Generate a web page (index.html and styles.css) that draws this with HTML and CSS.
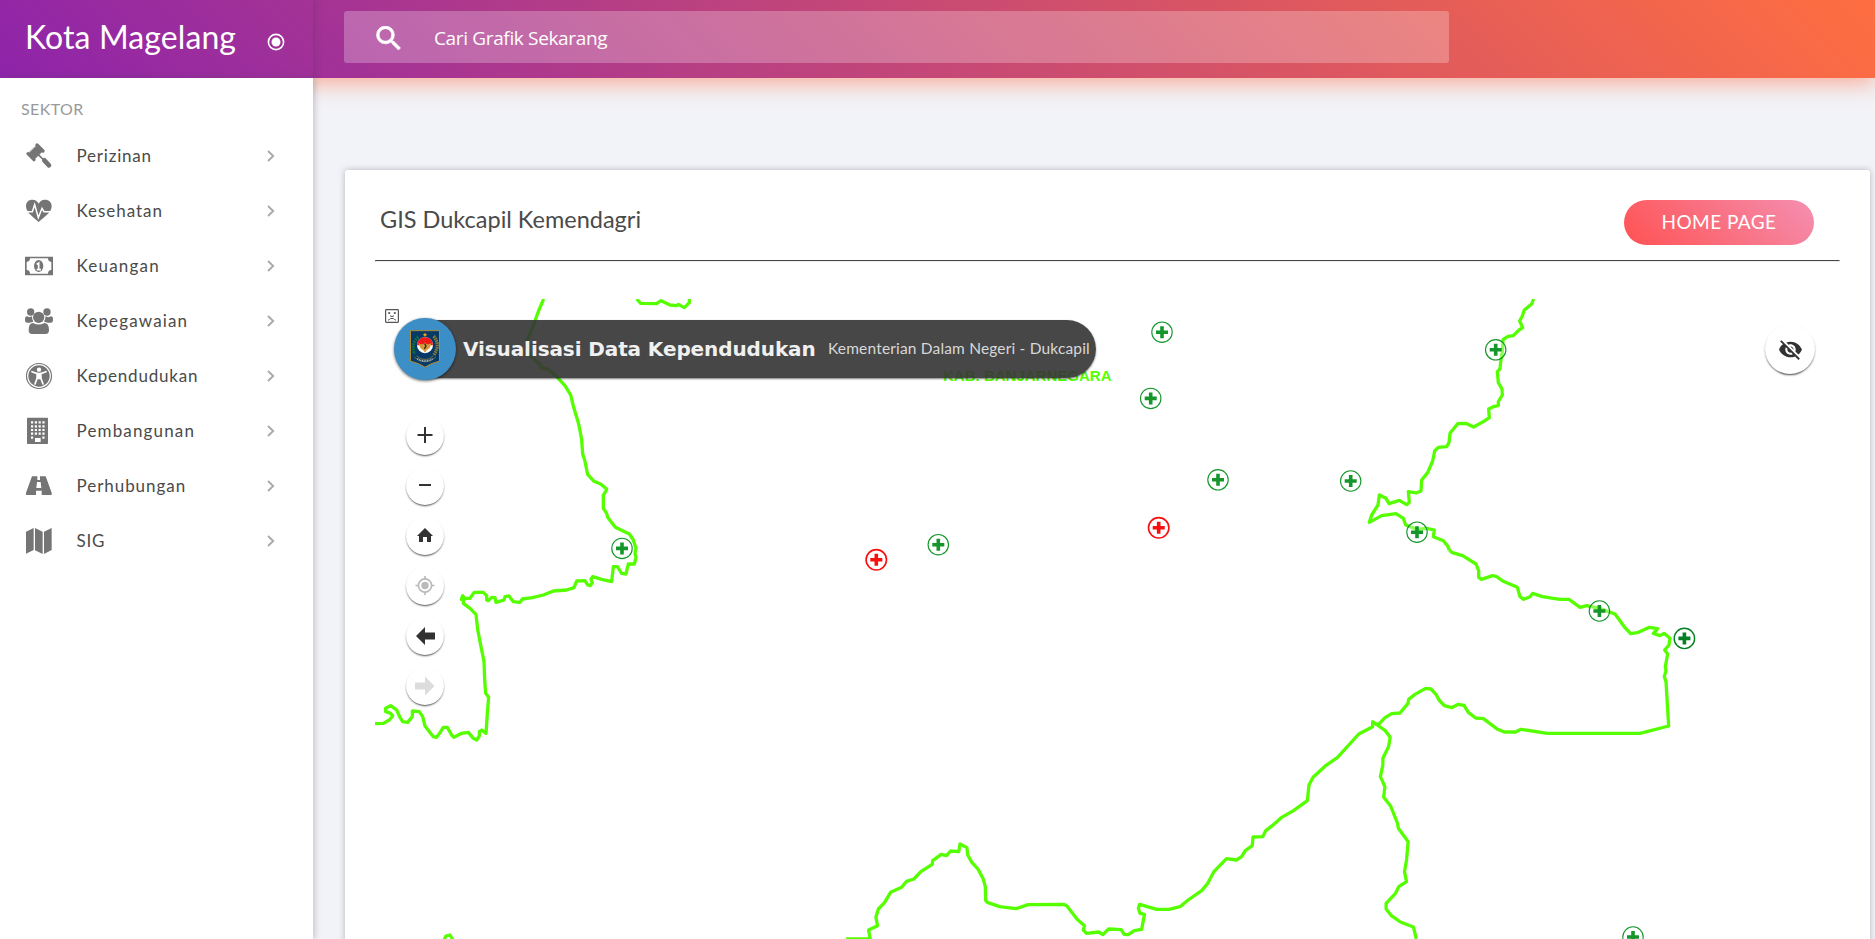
FILE: index.html
```html
<!DOCTYPE html>
<html lang="id">
<head>
<meta charset="utf-8">
<title>Kota Magelang</title>
<link rel="stylesheet" href="styles.css">
</head>
<body>
<header class="topbar">
  <div class="brand">
    <span class="brand-name">Kota Magelang</span>
    <svg class="brand-toggle" viewBox="0 0 18 18"><circle cx="9" cy="9" r="7.600" fill="none" stroke="#fff" stroke-width="1.600"/><circle cx="9" cy="9" r="4.500" fill="#fff"/></svg>
  </div>
  <div class="search">
    <svg class="search-icon" viewBox="3 3 17.5 17.5"><path fill="#fff" stroke="#fff" stroke-width=".5" d="M15.5 14h-.79l-.28-.27A6.47 6.47 0 0 0 16 9.5 6.5 6.5 0 1 0 9.500 16c1.610 0 3.090-.59 4.230-1.570l.27.28v.79l5 4.990L20.490 19l-4.990-5zm-6 0C7.010 14 5 11.990 5 9.500S7.010 5 9.500 5 14 7.010 14 9.500 11.990 14 9.500 14z"/></svg>
    <span class="search-text">Cari Grafik Sekarang</span>
  </div>
</header>
<div class="layout">
  <nav class="sidebar">
    <div class="nav-heading"><span>SEKTOR</span></div>
    <a class="nav-item"><svg class="nav-icon" viewBox="0 0 84 84"><g stroke="#757575" stroke-linecap="round"><path d="M36 9 54 27M9 35 27 53" stroke-width="10"/><path d="M34 12 51 29 30 50 12 33z" stroke-width="2"/><path d="M40 38 56 54" stroke-width="5"/><path d="M58 55 72 70" stroke-width="14"/></g></svg><span class="nav-label t-perizinan">Perizinan</span><svg class="chev" viewBox="0 0 8 12"><path d="M1 1 6.200 6 1 11"/></svg></a>
    <a class="nav-item"><svg class="nav-icon" viewBox="0 0 84 84"><path d="M41 75C20 56 3 46 3 27C3 14 12 8 22 8C32 8 38 14 41 20C44 14 50 8 60 8C72 8 80 16 80 27C80 46 62 56 41 75z"/><path d="M0 44H22L29 23 40 62 51 34 57 44H84" fill="none" stroke="#fff" stroke-width="4.500"/></svg><span class="nav-label t-kesehatan">Kesehatan</span><svg class="chev" viewBox="0 0 8 12"><path d="M1 1 6.200 6 1 11"/></svg></a>
    <a class="nav-item"><svg class="nav-icon" viewBox="0 0 84 84"><path fill-rule="evenodd" d="M0 14H84V70H0zM15 19A11 11 0 0 1 5 30V54A11 11 0 0 1 15 65H69A11 11 0 0 1 79 54V30A11 11 0 0 1 69 19z"/><ellipse cx="41" cy="42" rx="14" ry="18"/><path d="M35 37 41 33V52M35 53H48" fill="none" stroke="#fff" stroke-width="5"/></svg><span class="nav-label t-keuangan">Keuangan</span><svg class="chev" viewBox="0 0 8 12"><path d="M1 1 6.200 6 1 11"/></svg></a>
    <a class="nav-item"><svg class="nav-icon" viewBox="0 0 84 84"><circle cx="17" cy="15" r="11"/><circle cx="66" cy="15" r="11"/><circle cx="41" cy="31" r="17"/><path d="M0 38Q0 28 6 28Q14 33 21 28Q21 39 25 44Q18 45 14 47H7Q0 47 0 38zM84 38Q84 28 78 28Q70 33 62 28Q61 39 57 44Q64 45 68 47H77Q84 47 84 38z"/><path d="M24 48Q41 57 58 48Q72 48 72 70Q72 81 62 81H21Q11 81 11 70Q11 48 24 48z"/></svg><span class="nav-label t-kepegawaian">Kepegawaian</span><svg class="chev" viewBox="0 0 8 12"><path d="M1 1 6.200 6 1 11"/></svg></a>
    <a class="nav-item"><svg class="nav-icon" viewBox="0 0 84 84"><circle cx="42" cy="42" r="37.500" fill="none" stroke="#757575" stroke-width="3.500"/><circle cx="42" cy="42" r="32"/><circle cx="42" cy="23" r="6.500" fill="#fff"/><path d="M21 29 37 35 36 50 30 66M63 29 47 35 48 50 54 66" fill="none" stroke="#fff" stroke-width="5" stroke-linecap="round"/><path d="M35 32H49L48 52H36z" fill="#fff"/></svg><span class="nav-label t-kependudukan">Kependudukan</span><svg class="chev" viewBox="0 0 8 12"><path d="M1 1 6.200 6 1 11"/></svg></a>
    <a class="nav-item"><svg class="nav-icon" viewBox="0 0 84 84"><rect x="6" y="2" width="63" height="79" rx="2"/><path d="M18 16H60M18 28H60M18 39H60M18 50H60" stroke="#fff" stroke-width="6.500" stroke-dasharray="6.500 4.900"/><path d="M18 62H24.500M52 62H58.500" stroke="#fff" stroke-width="6.500"/><path d="M30 75V63H47V75z" fill="#fff"/></svg><span class="nav-label t-pembangunan">Pembangunan</span><svg class="chev" viewBox="0 0 8 12"><path d="M1 1 6.200 6 1 11"/></svg></a>
    <a class="nav-item"><svg class="nav-icon" viewBox="0 0 84 84"><path fill-rule="evenodd" d="M21 13H37V24H45V13H62L80 62Q82 69 78 69H50V56H33V69H5Q1 69 3 62zM36 30 34 48H49L47 30z"/></svg><span class="nav-label t-perhubungan">Perhubungan</span><svg class="chev" viewBox="0 0 8 12"><path d="M1 1 6.200 6 1 11"/></svg></a>
    <a class="nav-item"><svg class="nav-icon" viewBox="0 0 84 84"><path d="M3 14 26 3V69L3 80zM30 3 53 14V81L30 70zM57 14 80 3V69L57 81z"/></svg><span class="nav-label t-sig">SIG</span><svg class="chev" viewBox="0 0 8 12"><path d="M1 1 6.200 6 1 11"/></svg></a>
  </nav>
  <main class="content">
    <section class="card">
      <div class="card-head">
        <h1 class="card-title">GIS Dukcapil Kemendagri</h1>
        <a class="home-btn"><span>HOME PAGE</span></a>
      </div>
      <hr class="rule">
      <div class="map">
        <svg class="map-canvas" viewBox="375 299 1465 640">
          <defs>
            <g id="plus"><circle r="10.200" fill="#fff" fill-opacity=".3"/><path d="M-6 0H6M0-6V6" stroke-width="3.600"/></g>
          </defs>
          <g class="border">
            <g transform="translate(370 290) scale(.33333)">
              <polyline points="521,27 506,62 496,90 483,125 472,150 470,172 482,198 500,215 512,225 515,234 533,237 562,262 585,287 602,315 611,352 625,398 632,432 635,450 638,492 644,510 653,553 672,574 692,582 710,597 707,605 700,615 700,655 710,670 713,682 736,712 778,732 790,750 798,775 795,790 798,803 793,822 775,822 768,852 755,850 742,830 730,830 725,875 695,868 668,860 663,868 667,878 661,887 653,885 645,872 620,873 612,893 590,900 550,903 520,915 487,923 457,927 450,937 430,935 417,918 405,920 402,930 378,937 375,923 365,922 355,932 350,930 350,917 340,907 313,907 300,925 283,925 278,917 274,928 281,930 280,940 300,955 318,973 323,1018 332,1065 342,1115 344,1170 347,1210 356,1222 352,1270 348,1330 335,1320 328,1325 328,1338 320,1350 310,1345 295,1327 275,1330 252,1342 245,1335 232,1312 220,1312 210,1328 200,1342 190,1340 165,1308 158,1280 148,1265 127,1263 127,1280 113,1297 98,1295 90,1282 80,1260 62,1247 47,1255 47,1265 62,1270 68,1278 58,1290 40,1300 15,1301"/>
              <polyline points="800,27 812,40 860,41 873,32 900,45 920,47 925,43 943,53 958,38 958,27"/>
            </g>
            <g transform="translate(1100 290) scale(.33333)">
              <polyline points="1301,27 1295,42 1283,52 1273,60 1267,78 1259,93 1268,113 1257,120 1240,137 1224,139 1209,149 1207,185 1202,215 1200,237 1192,245 1195,278 1206,297 1207,315 1195,335 1195,347 1180,350 1166,357 1168,383 1150,395 1121,411 1097,400 1073,401 1050,430 1047,458 1040,470 1015,472 1004,483 998,513 983,548 965,570 963,603 948,609 925,605 928,637 920,644 898,631 867,641 858,625 838,615 834,645 815,675 808,697 845,677 888,671 910,685 917,705 950,718 980,715 1003,720 1000,740 1030,752 1043,768 1048,780"/>
            </g>
            <g transform="translate(1320 480) scale(.33333)">
              <polyline points="388,210 397,218 428,227 468,252 476,272 476,292 484,298 518,287 530,290 548,303 592,322 600,350 611,358 630,350 638,340 667,350 720,358 747,358 780,382 800,377 838,385 885,402 915,443 932,461 952,458 988,442 1013,446 1000,460 1020,467 1032,460 1050,475 1047,495 1034,510 1043,522 1036,560 1038,572 1033,590 1038,605 1046,738 960,760 682,760 603,748 587,756 553,756 533,748 490,716 467,714 445,697 432,676 415,673 395,683 373,677 357,660 348,643 333,627 317,625 285,643 266,658 264,670 240,699 215,701 195,713 178,731 165,733"/>
            </g>
            <g transform="translate(820 680) scale(.40816 .33333)">
              <polyline points="1362,132 1354,125 1354,140 1320,162 1268,232 1240,256 1208,292 1198,315 1194,362 1160,392 1130,413 1108,437 1092,452 1085,470 1061,471 1059,497 1042,512 1033,530 1020,540 996,536 965,575 950,610 935,632 902,660 882,680 855,688 825,688 783,673 780,685 784,700 795,703 788,748 770,752 755,764 745,763 738,749 707,747 693,764 683,756 653,760 645,750 648,737 630,718 605,678 597,673 510,674 480,686 440,680 410,667 406,662 405,620 400,597 387,567 372,547 362,525 360,503 343,492 340,515 320,513 310,527 297,523 276,542 275,553 247,575 230,597 212,604 200,622 173,637 158,668 143,687 137,712 141,737 119,750 123,777 64,777"/>
              <polyline points="1362,132 1385,152 1397,172 1393,200 1379,235 1379,255 1373,290 1384,320 1381,352 1398,378 1415,430 1417,445 1441,485 1437,540 1432,575 1437,605 1418,620 1410,640 1387,670 1387,687 1400,707 1422,726 1454,741 1461,777"/>
            </g>
            <polyline points="444,940 446,936 450,935 453,940"/>
          </g>
          <text class="region" x="943" y="380.700" textLength="168.500">KAB. BANJARNEGARA</text>
          <g class="pin">
            <use href="#plus" x="1162" y="332.200"/><use href="#plus" x="1150.700" y="398.400"/><use href="#plus" x="938.300" y="544.700"/><use href="#plus" x="1218" y="479.800"/><use href="#plus" x="1350.700" y="481"/><use href="#plus" x="1495.700" y="349.800"/><use href="#plus" x="1417" y="532.200"/><use href="#plus" x="1599.400" y="611"/><use href="#plus" x="622" y="548.400"/><use href="#plus" x="1633" y="937"/>
          </g>
          <g class="pin pin-dark"><use href="#plus" x="1684.400" y="638.400"/></g>
          <g class="pin pin-red"><use href="#plus" x="876.300" y="559.800"/><use href="#plus" x="1158.700" y="527.800"/></g>
        </svg>
        <svg class="broken" viewBox="0 0 14 14"><rect x=".6" y=".6" width="12.800" height="12.800" rx=".8" fill="#fff" stroke="#555" stroke-width="1.200"/><path d="M3.500 3 5 5M5 3 3.500 5M9 3 10.500 5M10.500 3 9 5M5 6.800 7 7.500 9 6.800M3 11.200Q5 10.600 5.500 9.500H8.500Q9 10.600 11 11.200" fill="none" stroke="#555"/></svg>
        <div class="banner">
          <span class="banner-title">Visualisasi Data Kependudukan</span>
          <span class="banner-sub">Kementerian Dalam Negeri - Dukcapil</span>
        </div>
        <div class="emblem">
          <svg viewBox="0 0 90 113"><path d="M1.500 1.500H88.500V93Q62 99 45 111Q28 99 1.500 93z" fill="#063a66" stroke="#b08a2e" stroke-width="3"/><path d="M25 20Q2 40 14 72" fill="none" stroke="#16703c" stroke-width="9" stroke-dasharray="5 3"/><path d="M71 18Q92 42 72 74" fill="none" stroke="#8f7a34" stroke-width="10" stroke-dasharray="5 2"/><circle cx="45" cy="45" r="24" fill="#fff"/><path d="M21 45A24 24 0 0 1 69 45z" fill="#f01818"/><path d="M45 36Q37 48 26 38 28 56 40 60L45 68 50 60Q62 56 64 38 53 48 45 36z" fill="#d39b3c"/><path d="M44 40 48 48 43 56" stroke="#3b2410" stroke-width="4" fill="none"/><path d="M45 8 48 12 52 13 48 17 45 20 42 17 38 13 42 12z" fill="#e8a318"/><path d="M13 81Q30 96 45 95 60 96 77 81M20 77Q32 89 45 88 58 89 70 77" stroke="#b08a2e" stroke-width="2" fill="none"/><path d="M22 86Q34 93 45 92 56 93 68 86" stroke="#9fb8cc" stroke-width="5" stroke-dasharray="3 2" fill="none"/></svg>
        </div>
        <div class="tools">
          <a class="tool"><svg viewBox="0 0 38 38"><path d="M11.500 18H26.500M19 10V26" stroke="#323232" stroke-width="2"/></svg></a>
          <a class="tool"><svg viewBox="0 0 38 38"><path d="M13 18H25" stroke="#323232" stroke-width="2"/></svg></a>
          <a class="tool"><svg viewBox="0 0 38 38"><path d="M19 11 27 19H25V25H21V20H17V25H13V19H11z" fill="#323232"/></svg></a>
          <a class="tool"><svg viewBox="0 0 38 38"><g stroke="#bababa" stroke-width="1.700" fill="none"><circle cx="19" cy="18.500" r="6.600"/><path d="M19 9V12M19 25V28M9.500 18.500H12.500M25.500 18.500H28.500"/></g><circle cx="19" cy="18.500" r="3.700" fill="#bababa"/></svg></a>
          <a class="tool"><svg viewBox="0 0 38 38"><path d="M10 19 19 10V15.500H29V22.500H19V28z" fill="#323232"/></svg></a>
          <a class="tool"><svg viewBox="0 0 38 38"><path d="M28.500 19 19 9.500V15.500H9V22.500H19V28.500z" fill="#dcdcdc"/></svg></a>
        </div>
        <a class="eye"><svg viewBox="0 0 24 24"><path fill="#323232" d="M12 7c2.760 0 5 2.240 5 5 0 .65-.13 1.260-.36 1.830l2.920 2.920c1.510-1.260 2.700-2.890 3.430-4.750-1.730-4.390-6-7.500-11-7.500-1.400 0-2.740.25-3.980.7l2.160 2.160C10.740 7.130 11.350 7 12 7zM2 4.270l2.280 2.280.46.46C3.080 8.300 1.780 10.020 1 12c1.730 4.390 6 7.500 11 7.500 1.550 0 3.030-.3 4.380-.84l.42.42L19.730 22 21 20.730 3.270 3 2 4.270zM7.530 9.800l1.550 1.550c-.05.21-.08.43-.08.65 0 1.660 1.340 3 3 3 .22 0 .44-.03.65-.08l1.550 1.550c-.67.33-1.410.53-2.200.53-2.760 0-5-2.240-5-5 0-.79.2-1.530.53-2.200zm4.310-.78 3.150 3.150.02-.16c0-1.660-1.340-3-3-3l-.17.01z"/></svg></a>
      </div>
    </section>
  </main>
</div>
</body>
</html>
```
FILE: styles.css
```css
* { box-sizing: border-box; }
html, body { height: 100%; }
body {
  margin: 0;
  display: flex;
  flex-direction: column;
  overflow: hidden;
  background: #f2f3f8;
  color: #4a4a4a;
  font-family: Lato, "Open Sans", sans-serif;
}
.topbar {
  flex: none;
  height: 78px;
  display: flex;
  align-items: flex-start;
  background: linear-gradient(45deg, #8e24aa, #ff6e40);
  box-shadow: 0 6px 20px 0 rgba(255, 110, 64, .5);
}
.brand {
  width: 313px;
  height: 78px;
  padding: 0 28px 0 25px;
  display: flex;
  align-items: center;
  justify-content: space-between;
  color: #fff;
  box-shadow: 2px 0 6px rgba(69, 65, 78, .25);
  clip-path: inset(0 -12px 0 0);
}
.brand-name { font-size: 32px; letter-spacing: .1px; line-height: 40px; padding-bottom: 4px; white-space: nowrap; }
.brand-toggle { width: 18px; height: 18px; margin-top: 5px; }
.search {
  width: 1105px;
  height: 52px;
  margin: 11px 0 0 31px;
  padding-left: 32px;
  display: flex;
  align-items: center;
  gap: 33px;
  border-radius: 3px;
  background: rgba(255, 255, 255, .25);
  color: #fff;
}
.search-icon { width: 25px; height: 24px; margin-top: 1px; }
.search-text { padding-top: 2px; font: 500 19px/26px "Open Sans", "Noto Sans", sans-serif; letter-spacing: -.35px; white-space: nowrap; }
.layout { flex: 1; display: flex; min-height: 0; }
.sidebar {
  position: relative;
  flex: none;
  width: 313px;
  padding-top: 20px;
  background: #fff;
  box-shadow: 2px 0 6px rgba(69, 65, 78, .25);
}
.nav-heading { height: 30px; padding: 1px 0 0 21px; font-size: 16px; line-height: 20px; color: #999; letter-spacing: .4px; }
.nav-item { height: 55px; padding: 0 38px 0 25px; display: flex; align-items: center; }
.nav-icon { width: 28px; height: 28px; fill: #757575; }
.nav-label { flex: 1; padding-left: 23.500px; font-size: 17px; white-space: nowrap; }
.t-perizinan { letter-spacing: .8px; }
.t-kesehatan { letter-spacing: .95px; }
.t-keuangan { letter-spacing: 1.200px; }
.t-kepegawaian { letter-spacing: 1.150px; }
.t-kependudukan { letter-spacing: .8px; }
.t-pembangunan { letter-spacing: 1.150px; }
.t-perhubungan { letter-spacing: .95px; }
.t-sig { letter-spacing: .7px; }
.chev { width: 8px; height: 12px; fill: none; stroke: #aaa; stroke-width: 1.900; }
.content { flex: 1; padding: 92px 5px 0 32px; }
.card {
  height: 800px;
  padding: 30px;
  border-radius: 3px;
  background: #fff;
  box-shadow: 0 0 6px rgba(69, 65, 78, .35);
}
.card-head { height: 45px; display: flex; justify-content: space-between; padding: 0 26px 0 5px; }
.card-title { margin: 1px 0 0; font-size: 23.500px; line-height: 36px; font-weight: 400; color: #4a4a4a; white-space: nowrap; }
.home-btn {
  width: 190px;
  height: 45px;
  border-radius: 23px;
  background: linear-gradient(45deg, #ff5252, #f48fb1);
  color: #fff;
  font-size: 19px;
  letter-spacing: .45px;
  line-height: 44px;
  text-align: center;
}
.rule { height: 2px; margin: 15px 0 37px; border: 1px inset #eee; border-top-color: #999; }
.map { position: relative; width: 1465px; height: 640px; overflow: hidden; }
.map-canvas { display: block; width: 1465px; height: 640px; }
.border polyline { fill: none; stroke: #5f0; stroke-width: 3.300; stroke-linejoin: round; vector-effect: non-scaling-stroke; }
.region { font: bold 15px "Liberation Sans", Arial, sans-serif; fill: #5f0; }
.pin { fill: none; stroke: #14962a; stroke-width: 1.100; }
.pin-dark { stroke: #058022; stroke-width: 1.400; }
.pin-red { stroke: #fa0f0f; stroke-width: 1.600; }
.broken { position: absolute; left: 10px; top: 10px; width: 14px; height: 14px; }
.banner {
  position: absolute;
  left: 50px;
  top: 21px;
  width: 671px;
  height: 58px;
  padding-left: 38px;
  display: flex;
  align-items: center;
  border-radius: 0 29px 29px 0;
  background: rgba(51, 51, 51, .9);
  box-shadow: 0 1px 2px rgba(0, 0, 0, .5);
  white-space: nowrap;
}
.banner-title { width: 365px; color: #f0f0f0; font: bold 20px/28px "DejaVu Sans", Verdana, sans-serif; letter-spacing: -.1px; }
.banner-sub { color: #d8d8d8; font-size: 15.500px; line-height: 24px; padding-bottom: 2px; letter-spacing: .17px; }
.emblem {
  position: absolute;
  left: 19px;
  top: 19px;
  width: 62px;
  height: 62px;
  display: flex;
  align-items: center;
  justify-content: center;
  border-radius: 50%;
  background: #3c8fc6;
  box-shadow: 0 1px 3px rgba(0, 0, 0, .6);
}
.emblem svg { width: 30px; height: 38px; }
.tools { position: absolute; left: 31px; top: 118px; display: grid; gap: 12px; }
.tool {
  width: 38px;
  height: 38px;
  border-radius: 50%;
  background: #fff;
  box-shadow: 0 1.500px 2px -.5px rgba(0, 0, 0, .7);
}
.tool svg { display: block; width: 38px; height: 38px; }
.eye {
  position: absolute;
  left: 1390px;
  top: 25px;
  width: 50px;
  height: 50px;
  display: flex;
  align-items: center;
  justify-content: center;
  border-radius: 50%;
  background: #fff;
  box-shadow: 0 1.500px 2px -.5px rgba(0, 0, 0, .7);
}
.eye svg { width: 25px; height: 25px; }
```
